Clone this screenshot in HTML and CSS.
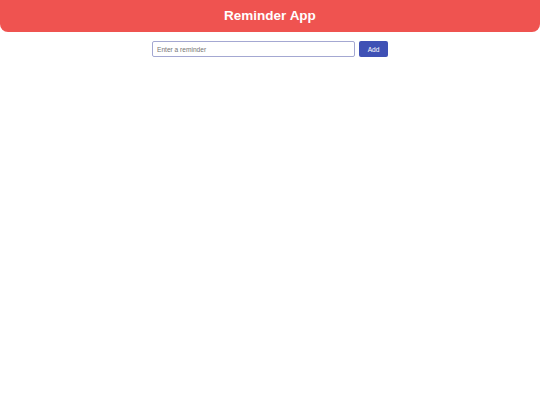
FILE: index.html
```html
<!DOCTYPE html>
<html lang="en">
<head>
<meta charset="utf-8">
<title>Reminder App</title>
<link rel="stylesheet" href="styles.css">
</head>
<body>
<header class="app-header">
  <h1 class="app-title">Reminder App</h1>
</header>
<main class="app-main">
  <form class="reminder-form" onsubmit="return false;">
    <input class="reminder-input" type="text" placeholder="Enter a reminder">
    <button class="add-button" type="submit">Add</button>
  </form>
</main>
</body>
</html>
```

FILE: styles.css
```css
html, body {
  margin: 0;
  padding: 0;
  background: #ffffff;
  font-family: "Liberation Sans", Arial, sans-serif;
}

.app-header {
  height: 32px;
  background: #ef5350;
  border-radius: 0 0 8px 8px;
  display: flex;
  align-items: center;
  justify-content: center;
}

.app-title {
  margin: 0;
  color: #ffffff;
  font-size: 13.5px;
  font-weight: bold;
  line-height: 1;
}

.app-main {
  padding-top: 9px;
}

.reminder-form {
  display: flex;
  justify-content: center;
  gap: 4px;
  margin: 0;
}

.reminder-input {
  box-sizing: border-box;
  width: 203px;
  height: 16px;
  margin: 0;
  padding: 0 4px;
  border: 1px solid #a4a8d2;
  border-radius: 2px;
  font-family: "Liberation Sans", Arial, sans-serif;
  font-size: 6.6px;
  color: #333;
  outline: none;
}

.reminder-input::placeholder {
  color: #757575;
}

.add-button {
  box-sizing: border-box;
  width: 29px;
  height: 16px;
  margin: 0;
  padding: 0;
  border: none;
  border-radius: 2px;
  background: #3f51b5;
  color: #ffffff;
  font-family: "Liberation Sans", Arial, sans-serif;
  font-size: 6.6px;
  cursor: pointer;
}
```
